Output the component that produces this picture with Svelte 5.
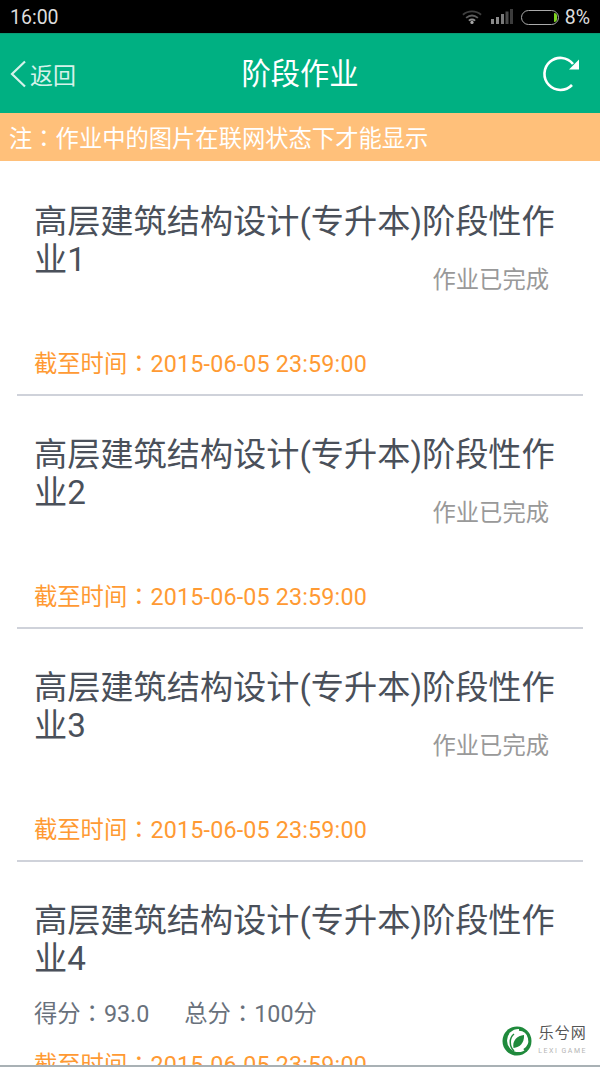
<script>
  const homework = [
    { id: 1, done: true },
    { id: 2, done: true },
    { id: 3, done: true },
    { id: 4, done: false, score: "93.0", total: "100分" },
  ];
</script>

<div class="page">
  <div class="status-bar">
    <span class="clock">16:00</span>
    <div class="status-right">
      <svg class="wifi" width="20" height="16" viewBox="0 0 22 16" fill="none" stroke="#3f3f3f" stroke-width="2">
        <path d="M1 5.500C6.500 .5 15.500 .5 21 5.500" />
        <path stroke="#5e5e5e" d="M4.500 9C8.500 5.800 13.500 5.800 17.500 9" />
        <path stroke="#8c8c8c" d="M7.500 12C9.800 10.300 12.200 10.300 14.500 12" />
        <circle cx="11" cy="14" r="1.800" fill="#a8a8a8" stroke="none" />
      </svg>
      <svg class="signal" width="22" height="16" viewBox="0 0 22 16">
        <rect x="0" y="10" width="3" height="5" fill="#8a8a8a" />
        <rect x="5" y="8" width="3" height="7" fill="#8a8a8a" />
        <rect x="10" y="5" width="3" height="10" fill="#7a7a7a" />
        <rect x="14.500" y="2.500" width="3" height="12.500" fill="#4a4a4a" />
        <rect x="19" y="0" width="3" height="15" fill="#3c3c3c" />
      </svg>
      <div class="battery"><div class="battery-level"></div></div>
      <span class="percent">8%</span>
    </div>
  </div>

  <header class="top-bar">
    <div class="back">
      <svg width="16" height="28" viewBox="0 0 16 28" fill="none" stroke="#d5f2ea" stroke-width="2.200">
        <path d="M15 1.500 2 14l13 12.500" />
      </svg>
      <span>返回</span>
    </div>
    <h1>阶段作业</h1>
    <svg width="38" height="38" viewBox="0 0 38 38" fill="none">
      <path d="M31 9A16 16 0 1 0 30 30" stroke="#fff" stroke-width="2.600" />
      <path d="M37 4.500v10H27z" fill="#fff" />
    </svg>
  </header>

  <div class="notice">注<span class="colon">：</span>作业中的图片在联网状态下才能显示</div>

  <div class="list">
    {#each homework as item}
      <div class="item">
        <div class="title">高层建筑结构设计(专升本)阶段性作业{item.id}</div>
        {#if item.done}
          <div class="status">作业已完成</div>
        {:else}
          <div class="scores">
            <span>得分<span class="colon">：</span>{item.score}</span>
            <span>总分<span class="colon">：</span>{item.total}</span>
          </div>
        {/if}
        <div class="deadline">截至时间<span class="colon">：</span><span class="date">2015-06-05 23:59:00</span></div>
      </div>
    {/each}
  </div>

  <div class="watermark">
    <svg width="30" height="30" viewBox="0 0 30 30" fill="none">
      <circle cx="15" cy="15" r="14.500" fill="#1f8a3c" />
      <circle cx="16.500" cy="14.500" r="11.500" fill="#fff" />
      <path d="M17 3.500A11 11 0 0 1 22 24" stroke="#1f8a3c" stroke-width="2.500" />
      <path d="M12 8C7 12 7 20 12 25" stroke="#1f8a3c" stroke-width="1.500" />
      <path d="M11.500 22C10 15 15 9.500 22 9C22.500 16.500 18 21.500 11.500 22Z" fill="#1f8a3c" />
    </svg>
    <div class="watermark-text">
      <span class="watermark-name">乐兮网</span>
      <span class="watermark-sub">LEXI GAME</span>
    </div>
  </div>
</div>

<style>
  :global(body) {
    margin: 0;
    background: #fff;
  }

  .page {
    position: relative;
    display: flex;
    flex-direction: column;
    height: 1067px;
    overflow: hidden;
    font-family: Roboto, "Noto Sans CJK SC", sans-serif;
  }

  .colon {
    font-family: "Noto Sans CJK TC", sans-serif;
  }

  .status-bar {
    display: flex;
    flex: none;
    align-items: center;
    justify-content: space-between;
    box-sizing: border-box;
    height: 33px;
    padding: 1px 10px 0;
    background: #000;
    color: #ddd;
    font-size: 19.500px;
  }

  .status-right {
    display: flex;
    align-items: center;
  }

  .wifi {
    margin-right: 9px;
  }

  .signal {
    margin-right: 8px;
  }

  .battery {
    display: flex;
    justify-content: flex-end;
    box-sizing: border-box;
    width: 38px;
    height: 15px;
    margin-right: 6px;
    padding: 2px 1px;
    border: 1px solid #aaa;
    border-radius: 8px;
  }

  .battery-level {
    width: 3px;
    background: #7ed321;
    border-radius: 0 3px 3px 0;
  }

  .top-bar {
    display: flex;
    flex: none;
    position: relative;
    align-items: center;
    justify-content: space-between;
    height: 80px;
    padding: 0 20px 0 10px;
    background: #00b082;
    border-top: 1px solid #0a9c76;
    box-sizing: border-box;
    color: #fff;
  }

  .back {
    display: flex;
    align-items: center;
    gap: 4px;
    color: #d5f2ea;
    font-size: 23px;
  }

  h1 {
    position: absolute;
    left: 0;
    right: 0;
    margin: 0;
    padding-bottom: 6px;
    font-size: 29.300px;
    font-weight: 400;
    text-align: center;
  }

  .notice {
    flex: none;
    height: 48px;
    padding-left: 9px;
    background: #ffc07a;
    color: #fff;
    font-size: 23.300px;
    line-height: 48px;
  }

  .list {
    flex: 1;
    min-height: 0;
    overflow: hidden;
    padding-top: 2px;
    border-bottom: 2px solid #a9b1b5;
  }

  .item {
    display: flex;
    flex-direction: column;
    box-sizing: border-box;
    height: 233px;
    margin: 0 17px;
    padding: 40px 17px 0;
    border-bottom: 2px solid #cfd2da;
  }

  .item:last-child {
    border-bottom: none;
  }

  .title {
    color: #4a505a;
    font-size: 33.200px;
    line-height: 38px;
  }

  .status {
    margin: -11px 17px 0 0;
    color: #999;
    font-size: 23.300px;
    line-height: 24px;
    text-align: right;
  }

  .scores {
    display: flex;
    gap: 35px;
    margin-top: 22px;
    color: #69717c;
    font-size: 23.300px;
    line-height: 24px;
  }

  .deadline {
    margin-top: auto;
    padding-bottom: 15px;
    color: #ff9a33;
    font-size: 23.300px;
    line-height: 30px;
  }

  .date {
    letter-spacing: 0.170px;
  }

  .watermark {
    position: absolute;
    right: 13px;
    bottom: 11px;
    display: flex;
    align-items: center;
    gap: 6px;
    background: #fff;
  }

  .watermark-text {
    display: flex;
    flex-direction: column;
    align-items: center;
  }

  .watermark-name {
    color: #555;
    font-size: 15px;
    line-height: 16px;
    letter-spacing: 1px;
  }

  .watermark-sub {
    margin-top: 5px;
    color: #b5b5b5;
    font-size: 7px;
    line-height: 10px;
    letter-spacing: 1.500px;
  }
</style>
